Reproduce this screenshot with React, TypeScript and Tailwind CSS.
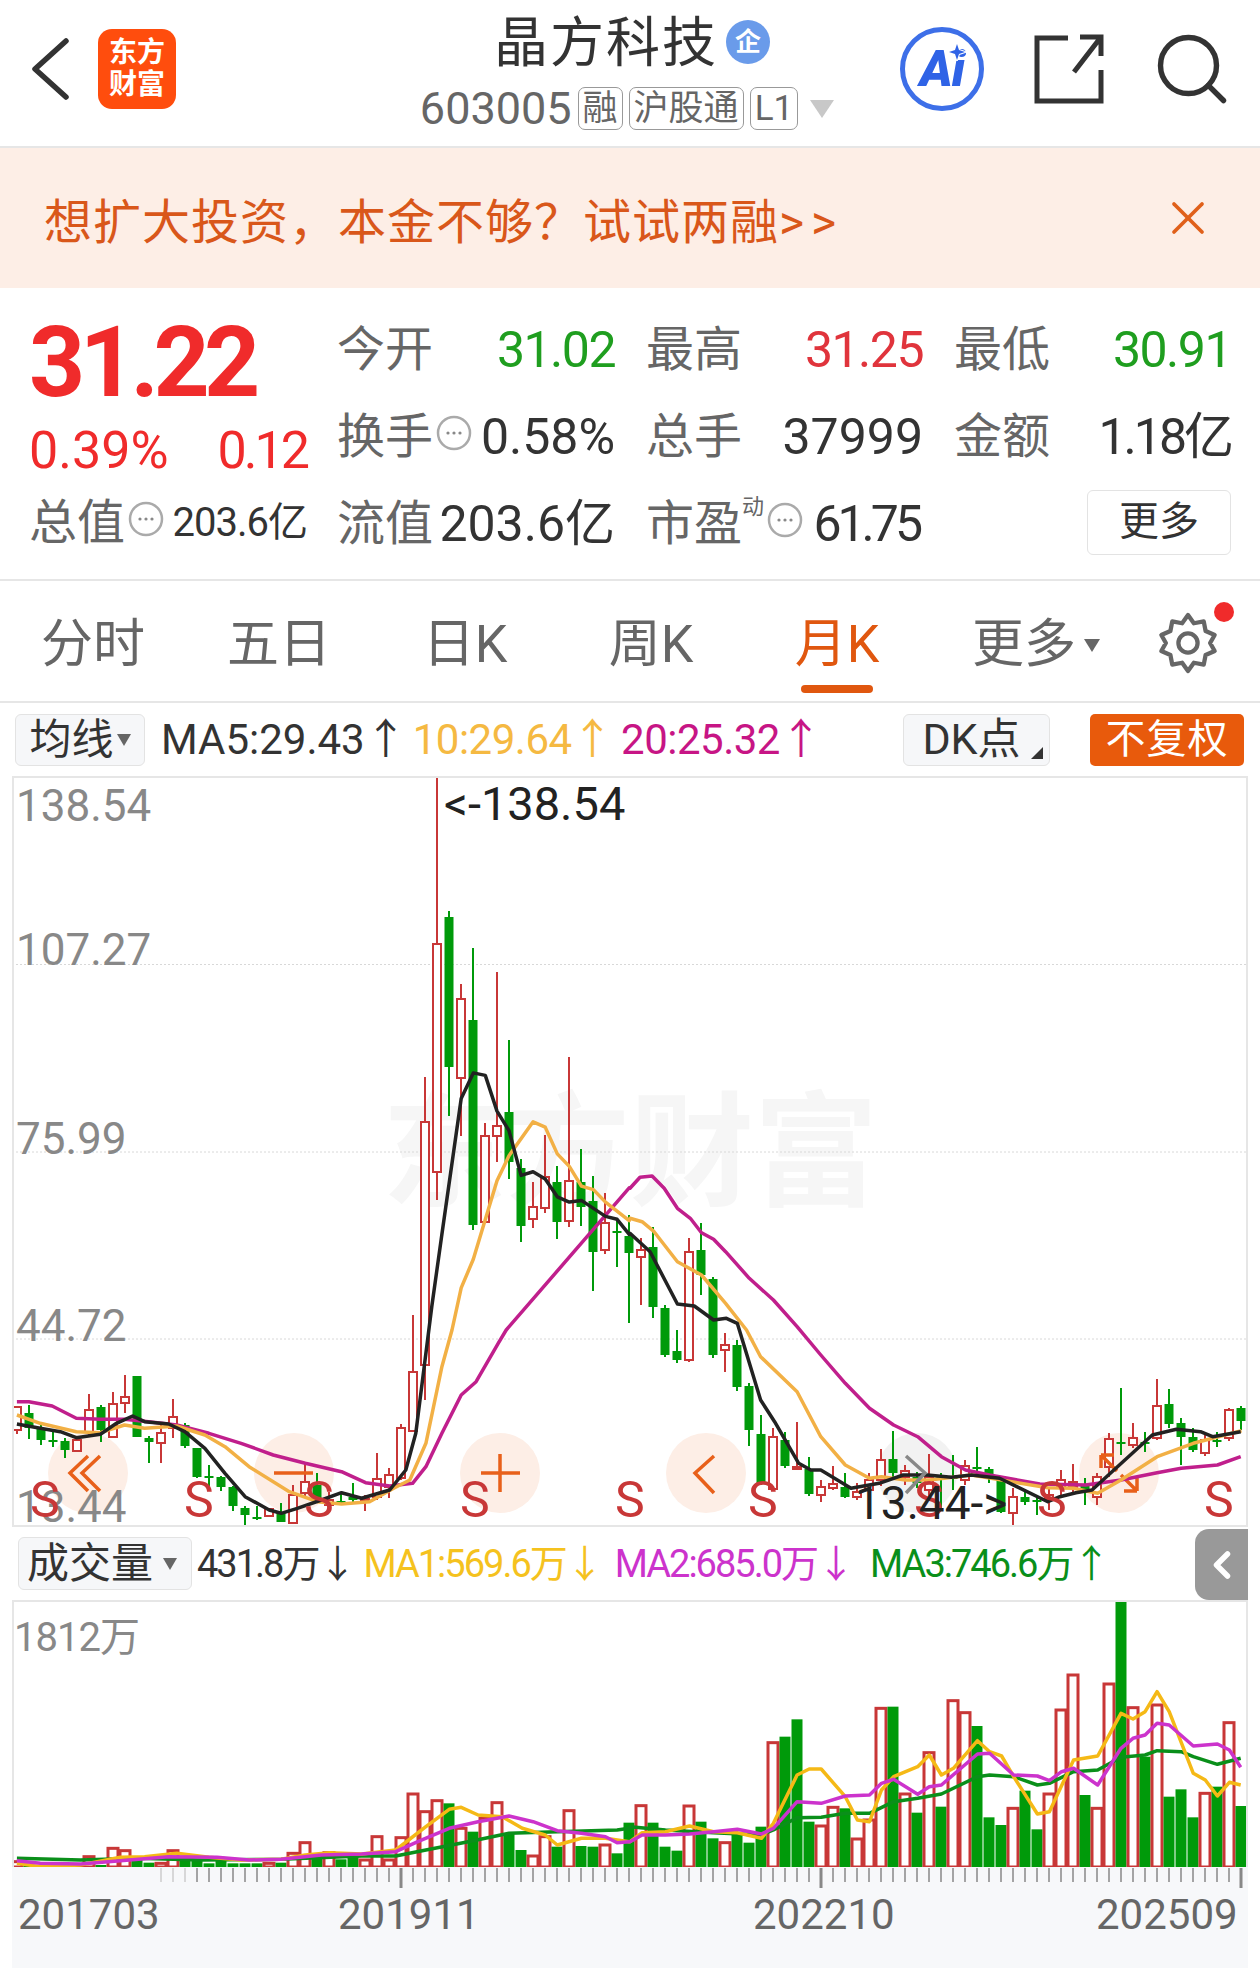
import { ChevronLeft, Search, X } from 'lucide-react';
import type { ReactNode } from 'react';

type Candle = [number, number, number, number, number];
type Pt = [number, number];

// high, body top, body bottom, low, 1 = up. All in page pixels.
const candles: Candle[] = [
  [1406, 1407, 1430, 1434, 1], [1405, 1413, 1428, 1439, 0], [1425, 1428, 1440, 1445, 0], [1432, 1440, 1442, 1447, 0],
  [1438, 1441, 1450, 1458, 0], [1437, 1440, 1451, 1452, 1], [1394, 1410, 1432, 1437, 1], [1405, 1407, 1430, 1442, 0],
  [1392, 1404, 1437, 1438, 1], [1375, 1397, 1403, 1413, 1], [1376, 1376, 1437, 1437, 0], [1436, 1438, 1442, 1463, 0],
  [1425, 1433, 1443, 1463, 1], [1399, 1417, 1428, 1438, 1], [1423, 1425, 1446, 1448, 0], [1448, 1448, 1477, 1478, 0],
  [1465, 1476, 1477, 1487, 0], [1476, 1477, 1487, 1491, 0], [1486, 1487, 1506, 1511, 0], [1506, 1508, 1515, 1525, 0],
  [1506, 1517, 1518, 1520, 0], [1509, 1509, 1516, 1517, 1], [1503, 1513, 1522, 1522, 0], [1485, 1495, 1523, 1523, 1],
  [1463, 1482, 1493, 1497, 1], [1473, 1485, 1498, 1500, 0], [1492, 1500, 1505, 1506, 1], [1492, 1501, 1502, 1505, 0],
  [1483, 1497, 1500, 1503, 0], [1495, 1499, 1500, 1511, 1], [1453, 1479, 1497, 1500, 1], [1468, 1475, 1487, 1498, 1],
  [1424, 1428, 1478, 1480, 1], [1315, 1372, 1431, 1432, 1], [1077, 1122, 1365, 1400, 1], [777, 944, 1172, 1200, 1],
  [911, 917, 1067, 1116, 0], [984, 999, 1078, 1136, 1], [948, 1020, 1225, 1230, 0], [1123, 1136, 1222, 1222, 1],
  [972, 1126, 1136, 1162, 1], [1040, 1112, 1162, 1179, 0], [1159, 1168, 1226, 1242, 0], [1182, 1207, 1219, 1228, 1],
  [1135, 1177, 1208, 1213, 1], [1166, 1182, 1222, 1239, 0], [1057, 1181, 1221, 1227, 1], [1149, 1182, 1207, 1226, 0],
  [1176, 1201, 1252, 1291, 0], [1193, 1223, 1250, 1254, 1], [1218, 1231, 1232, 1267, 0], [1215, 1236, 1253, 1323, 0],
  [1238, 1250, 1257, 1305, 1], [1227, 1247, 1307, 1318, 0], [1305, 1308, 1355, 1357, 0], [1330, 1351, 1360, 1363, 0],
  [1238, 1252, 1360, 1362, 1], [1223, 1250, 1275, 1295, 0], [1277, 1279, 1355, 1358, 0], [1333, 1345, 1350, 1372, 1],
  [1340, 1345, 1387, 1391, 0], [1383, 1386, 1430, 1446, 0], [1415, 1434, 1483, 1485, 0], [1428, 1437, 1489, 1489, 1],
  [1432, 1440, 1466, 1468, 0], [1422, 1467, 1469, 1470, 1], [1457, 1469, 1494, 1496, 0], [1480, 1487, 1495, 1502, 1],
  [1466, 1484, 1488, 1490, 1], [1473, 1487, 1497, 1498, 0], [1483, 1492, 1497, 1500, 1], [1473, 1480, 1490, 1496, 1],
  [1449, 1460, 1480, 1486, 1], [1431, 1459, 1473, 1478, 0], [1465, 1471, 1477, 1485, 1], [1472, 1477, 1483, 1488, 0],
  [1454, 1477, 1490, 1500, 1], [1473, 1475, 1479, 1510, 0], [1455, 1477, 1479, 1490, 0], [1460, 1466, 1480, 1485, 1],
  [1447, 1467, 1469, 1473, 0], [1467, 1469, 1474, 1483, 0], [1478, 1480, 1512, 1513, 0], [1488, 1497, 1513, 1527, 1],
  [1492, 1497, 1502, 1505, 0], [1497, 1500, 1502, 1515, 0], [1488, 1495, 1500, 1510, 1], [1470, 1480, 1488, 1497, 1],
  [1464, 1482, 1487, 1495, 1], [1478, 1485, 1493, 1505, 0], [1473, 1477, 1497, 1505, 1], [1433, 1439, 1467, 1477, 1],
  [1388, 1442, 1444, 1455, 0], [1423, 1438, 1445, 1448, 1], [1432, 1442, 1443, 1452, 0], [1379, 1406, 1438, 1440, 1],
  [1389, 1404, 1424, 1428, 0], [1418, 1423, 1437, 1465, 0], [1428, 1437, 1450, 1452, 0], [1435, 1440, 1453, 1456, 1],
  [1432, 1440, 1441, 1447, 0], [1408, 1410, 1438, 1441, 1], [1406, 1408, 1421, 1430, 0],
];

// volume bar tops, page y = 1520 + v / 3
const volumes = [
  1025, 1038, 1040, 1040, 1042, 1040, 1010, 1035, 985, 992, 1010, 1028, 1030, 992, 1020, 1020, 1030, 1020, 1030, 1030,
  1030, 1030, 1028, 1000, 968, 1015, 998, 1018, 1010, 1020, 950, 1020, 953, 822, 875, 842, 850, 925, 935, 895,
  848, 940, 990, 1008, 950, 980, 872, 978, 980, 975, 1000, 908, 857, 908, 980, 992, 858, 905, 955, 968,
  945, 968, 920, 668, 650, 598, 905, 918, 862, 865, 957, 900, 565, 560, 822, 878, 698, 860, 542, 578,
  618, 892, 915, 865, 812, 928, 822, 570, 465, 825, 865, 492, 243, 563, 710, 555, 830, 808, 892, 820,
  800, 608, 858,
];
const volUp = new Set([0, 5, 6, 8, 9, 12, 13, 21, 23, 24, 26, 29, 30, 31, 32, 33, 34, 35, 37, 39, 40, 43, 44, 46, 49, 52, 56, 59, 63, 67, 68, 70, 71, 72, 74, 76, 78, 79, 83, 86, 87, 88, 90, 91, 93, 95, 99, 101]);

const at = (pts: Pt[], ox: number, oy: number, sy: number): Pt[] => pts.map(([x, y]) => [ox + x / 2.489, oy + y / sy]);
const line = (...parts: Pt[][]) => parts.flat().map(([x, y]) => `${x.toFixed(1)},${y.toFixed(1)}`).join(' ');

const ma5 = line(
  at([[42, 372], [100, 385], [150, 395], [190, 413], [250, 403], [290, 370], [330, 348], [360, 365], [420, 372], [460, 395], [510, 445], [560, 520], [610, 590], [670, 630], [700, 640], [740, 625], [800, 600], [850, 578], [900, 595], [970, 570], [1010, 510], [1035, 400], [1060, 160]], 0, 1300, 3),
  at([[1075, 1500], [1100, 1300], [1148, 920], [1178, 848], [1208, 855], [1237, 955], [1267, 1010], [1297, 1135], [1327, 1125], [1357, 1145], [1387, 1195], [1417, 1210], [1447, 1205], [1507, 1250], [1536, 1258], [1566, 1300]], 0, 770, 2.8),
  at([[0, 400], [50, 455], [118, 612], [160, 618], [208, 660], [240, 655], [267, 670], [325, 900], [360, 965], [420, 1090], [450, 1110], [475, 1110], [550, 1165], [620, 1150], [680, 1125], [740, 1125], [800, 1132], [850, 1125], [920, 1135], [1040, 1205], [1070, 1190], [1110, 1178], [1150, 1170], [1300, 1005], [1360, 988], [1420, 995], [1450, 1010], [1520, 995]], 630, 1100, 3),
);
const ma10 = line(
  at([[42, 345], [100, 370], [190, 395], [250, 398], [310, 375], [360, 385], [440, 378], [510, 405], [560, 440], [620, 500], [720, 575], [790, 605], [850, 612], [920, 605], [980, 565], [1020, 540], [1060, 430], [1100, 200]], 0, 1300, 3),
  at([[1125, 1568], [1148, 1450], [1178, 1370], [1237, 1150], [1267, 1080], [1327, 985], [1357, 1000], [1387, 1075], [1417, 1110], [1447, 1165], [1477, 1175], [1507, 1210], [1566, 1262]], 0, 770, 2.8),
  at([[0, 355], [30, 365], [60, 395], [118, 485], [178, 525], [238, 610], [290, 690], [325, 770], [416, 875], [475, 1010], [536, 1095], [596, 1135], [626, 1130], [686, 1140], [745, 1140], [850, 1125], [1040, 1163], [1104, 1165], [1164, 1180], [1222, 1140], [1312, 1070], [1402, 1030], [1522, 992]], 630, 1100, 3),
);
const ma20 = line(
  at([[42, 305], [72, 305], [130, 318], [190, 355], [250, 358], [310, 358], [370, 365], [440, 375], [520, 400], [600, 430], [680, 465], [760, 490], [850, 515], [910, 548], [970, 558], [1027, 550], [1060, 500], [1100, 400], [1148, 285], [1185, 245], [1240, 130]], 0, 1300, 3),
  at([[1260, 1568], [1566, 1170]], 0, 770, 2.8),
  at([[0, 265], [25, 232], [55, 228], [85, 265], [118, 325], [150, 355], [178, 398], [208, 418], [238, 455], [297, 535], [357, 600], [416, 680], [475, 765], [536, 850], [596, 925], [656, 975], [716, 1010], [775, 1070], [835, 1110], [895, 1125], [1020, 1152], [1134, 1155], [1222, 1140], [1312, 1118], [1372, 1105], [1462, 1095], [1520, 1070]], 630, 1100, 3),
);
const volMa1 = line(
  at([[42, 1030], [100, 1040], [200, 1035], [300, 1012], [360, 1010], [440, 1000], [520, 1012], [600, 1020], [700, 1018], [760, 1005], [820, 998], [900, 1002], [985, 990], [1060, 920], [1118, 868], [1148, 862], [1190, 885], [1250, 890], [1300, 925], [1357, 945], [1387, 975], [1447, 955], [1507, 955], [1566, 965]], 0, 1520, 3),
  at([[0, 965], [30, 938], [88, 935], [148, 918], [208, 935], [267, 938], [327, 955], [357, 910], [416, 765], [446, 747], [476, 747], [536, 830], [566, 900], [596, 905], [626, 810], [656, 770], [716, 740], [745, 705], [775, 765], [805, 745], [865, 662], [895, 695], [925, 708], [955, 770], [1014, 882], [1044, 875], [1104, 720], [1164, 708], [1222, 580], [1252, 597], [1282, 575], [1312, 515], [1342, 575], [1402, 760], [1432, 780], [1462, 828], [1492, 787], [1520, 795]], 630, 1520, 3),
);
const volMa2 = line(
  at([[42, 1022], [100, 1030], [200, 1032], [300, 1022], [420, 1010], [540, 1012], [620, 1020], [700, 1018], [800, 1005], [900, 1002], [985, 995], [1040, 965], [1118, 925], [1190, 905], [1267, 888], [1327, 905], [1387, 932], [1447, 940], [1507, 950], [1536, 968], [1566, 965]], 0, 1520, 3),
  at([[0, 965], [30, 945], [88, 945], [148, 942], [208, 935], [267, 928], [327, 942], [357, 925], [416, 845], [476, 850], [536, 828], [596, 825], [626, 790], [656, 778], [716, 823], [745, 800], [775, 795], [865, 702], [895, 700], [955, 765], [1014, 768], [1044, 782], [1074, 755], [1104, 745], [1164, 795], [1222, 685], [1252, 655], [1282, 645], [1312, 610], [1342, 615], [1402, 678], [1462, 672], [1492, 690], [1520, 742]], 630, 1520, 3),
);
const volMa3 = line(
  at([[42, 1015], [200, 1020], [340, 1015], [500, 1020], [700, 1018], [900, 1008], [985, 1008], [1060, 990], [1178, 962], [1267, 940], [1387, 935], [1536, 930], [1566, 925]], 0, 1520, 3),
  at([[0, 920], [88, 930], [208, 938], [327, 945], [357, 930], [416, 893], [476, 892], [536, 880], [596, 880], [656, 845], [716, 835], [775, 822], [865, 770], [895, 765], [955, 770], [1014, 795], [1044, 790], [1104, 755], [1164, 750], [1222, 712], [1282, 705], [1312, 692], [1372, 695], [1402, 710], [1462, 733], [1520, 715]], 630, 1520, 3),
);

const RED = '#c83737';
const GREEN = '#009a0a';
const barX = (i: number) => 17 + 12 * i;

const Tag = ({ children }: { children: ReactNode }) => (
  <span className="flex h-[43px] items-center rounded-[7px] border border-[#999] px-[4px] text-[35px] leading-none text-[#666]">{children}</span>
);

const Dots = () => (
  <svg width="36" height="36" viewBox="0 0 36 36" className="ml-[3px] shrink-0 -translate-y-[4px]">
    <circle cx="18" cy="18" r="16" fill="none" stroke="#aaa" strokeWidth="2.5" />
    <circle cx="12" cy="18" r="1.6" fill="#888" />
    <circle cx="18" cy="18" r="1.6" fill="#888" />
    <circle cx="24" cy="18" r="1.6" fill="#888" />
  </svg>
);

const Stat = ({ label, extra, value, color }: { label: string; extra?: ReactNode; value: string; color: string }) => (
  <div className="flex items-center justify-between">
    <div className="flex items-center text-[#666]">
      <span className="text-[48px] leading-none">{label}</span>
      {extra}
    </div>
    <span className={`text-[50px] leading-none ${color}`}>{value}</span>
  </div>
);

const Tab = ({ label, active }: { label: string; active?: boolean }) => (
  <div className={`relative flex h-full w-[186px] items-center justify-center pt-[8px] text-[52px] leading-none ${active ? 'text-[#e0570f]' : 'text-[#666]'}`}>
    {label}
    {active && <span className="absolute bottom-[8px] left-[57px] h-[8px] w-[72px] rounded-full bg-[#e0570f]" />}
  </div>
);

const ChartLabel = ({ className, children }: { className: string; children: ReactNode }) => (
  <span className={`absolute leading-none whitespace-nowrap ${className}`}>{children}</span>
);

const CandleChart = () => (
  <svg viewBox="14 778 1232 747" className="absolute inset-0 h-full w-full">
    {[964.5, 1152, 1339].map(y => (
      <line key={y} x1="12" x2="1248" y1={y} y2={y} stroke="#d8d8d8" strokeWidth="1" strokeDasharray="2 2" />
    ))}
    {[88, 294, 500, 706, 917, 1119].map((cx, i) => (
      <ellipse key={cx} cx={cx} cy="1473" rx="40" ry="40" fill={i === 4 ? '#f2f2f2' : '#fdeee6'} />
    ))}
    {candles.map(([h, t, b, l, up], i) => {
      const x = barX(i);
      const color = up ? RED : GREEN;
      return (
        <g key={i}>
          <line x1={x} x2={x} y1={h} y2={l} stroke={color} strokeWidth="2" />
          {up ? (
            <rect x={x - 4} y={t} width="8" height={Math.max(b - t, 2)} fill="#fff" stroke={color} strokeWidth="2" />
          ) : (
            <rect x={x - 4.5} y={t} width="9" height={Math.max(b - t, 2)} fill={color} />
          )}
        </g>
      );
    })}
    <g fill="none" stroke="#e8601a" strokeWidth="3.5">
      <path d="M88 1456 L70 1473 L88 1491 M100 1456 L82 1473 L100 1491" />
      <path d="M274 1473 H313" />
      <path d="M481 1473 H520 M500 1454 V1492" />
      <path d="M714 1456 L695 1473 L714 1493" />
      <path d="M1101 1455 H1114 M1101 1455 V1468 M1101 1455 L1117 1471 M1137 1491 H1124 M1137 1491 V1478 M1137 1491 L1121 1475" />
    </g>
    <polyline points={ma20} fill="none" stroke="#c01f8c" strokeWidth="3.5" strokeLinejoin="round" />
    <polyline points={ma10} fill="none" stroke="#f2b045" strokeWidth="3.5" strokeLinejoin="round" />
    <polyline points={ma5} fill="none" stroke="#222" strokeWidth="3.5" strokeLinejoin="round" />
    <path d="M906 1456 L925 1473 L906 1493" fill="none" stroke="#888" strokeWidth="3.5" />
  </svg>
);

const VolumeChart = () => (
  <svg viewBox="14 1602 1232 265" className="absolute inset-0 h-full w-full">
    {volumes.map((v, i) => {
      const y = 1520 + v / 3;
      const x = barX(i);
      return volUp.has(i) ? (
        <rect key={i} x={x - 5} y={y} width="10" height={1867 - y} fill="#fff" stroke={RED} strokeWidth="3" />
      ) : (
        <rect key={i} x={x - 5.5} y={y} width="11" height={1868 - y} fill={GREEN} />
      );
    })}
    <polyline points={volMa3} fill="none" stroke="#0a8f1a" strokeWidth="3.5" strokeLinejoin="round" />
    <polyline points={volMa1} fill="none" stroke="#f5b916" strokeWidth="3.5" strokeLinejoin="round" />
    <polyline points={volMa2} fill="none" stroke="#cc33cc" strokeWidth="3.5" strokeLinejoin="round" />
  </svg>
);

const Ticks = () => (
  <svg viewBox="12 1867 1236 24" className="absolute left-0 top-0 h-[24px] w-full">
    {candles.map((_, i) => {
      if (i < 12) return null;
      const major = i === 32 || i === 67 || i === 102;
      return <line key={i} x1={barX(i)} x2={barX(i)} y1="1868" y2={major ? 1888 : 1882} stroke={i < 15 ? '#ccc' : '#888'} strokeWidth={major ? 3 : 1.5} />;
    })}
  </svg>
);

export default function App() {
  return (
    <div className="h-[1972px] w-[1260px] overflow-hidden bg-white font-['Roboto','Noto_Sans_CJK_SC',sans-serif]">
      {/* header */}
      <header className="relative flex h-[148px] items-center border-b-2 border-[#e6e6e6] pb-[8px]">
        <svg width="40" height="62" viewBox="0 0 40 62" fill="none" stroke="#333" strokeWidth="5.5" strokeLinecap="round" strokeLinejoin="round" className="ml-[30px]">
          <path d="M36 3 L5 31 L36 59" />
        </svg>
        <div className="ml-[28px] flex h-[80px] w-[78px] flex-col items-center justify-center rounded-[14px] bg-[#ff4d0d] text-[28px] font-bold leading-[32px] text-white">
          <span>东方</span>
          <span>财富</span>
        </div>
        <div className="ml-[241px] flex w-[420px] flex-col items-center self-start pt-[15px]">
          <div className="ml-[10px] flex items-center">
            <span className="text-[54px] leading-[58px] tracking-[2px] text-[#333]">晶方科技</span>
            <span className="ml-[8px] flex h-[44px] w-[44px] -translate-y-[2px] items-center justify-center rounded-full bg-[#6a9bea] text-[26px] font-bold leading-none text-white">企</span>
          </div>
          <div className="mt-[13px] flex items-center gap-[6px]">
            <span className="text-[45px] leading-none text-[#666]">603005</span>
            <Tag>融</Tag>
            <Tag>沪股通</Tag>
            <Tag>L1</Tag>
            <span className="ml-[6px] h-0 w-0 border-x-[12px] border-t-[18px] border-x-transparent border-t-[#c8c8c8]" />
          </div>
        </div>
        <div className="ml-[63px] flex items-center">
          <div className="relative flex h-[84px] w-[84px] items-center justify-center rounded-full border-[5px] border-[#3d6fe8] bg-white text-[50px] font-black italic leading-none tracking-[-1px] text-[#2f63e6]">
            Ai
            <svg width="18" height="18" viewBox="0 0 18 18" className="absolute left-[43px] top-[11px]">
              <path d="M9 1 L11 7 L17 9 L11 11 L9 17 L7 11 L1 9 L7 7 Z" fill="#2f63e6" stroke="#fff" strokeWidth="2" paintOrder="stroke" />
            </svg>
          </div>
          <svg width="70" height="70" viewBox="0 0 70 70" className="ml-[50px]" fill="none" stroke="#333" strokeWidth="5">
            <path d="M34 4 H3 V67 H67 V36" />
            <path d="M67 3 L40 38 M46 3 H67 V22" />
          </svg>
          <Search className="ml-[46px] h-[84px] w-[84px] text-[#333]" strokeWidth={1.55} />
        </div>
      </header>

      {/* banner */}
      <div className="flex h-[140px] items-center justify-between bg-[#fdeee6] pl-[44px] pr-[44px]">
        <span className="mt-[10px] text-[48px] leading-none tracking-[1px] text-[#d9571a]">
          想扩大投资，本金不够？试试两融<span className="tracking-[7px]">&gt;&gt;</span>
        </span>
        <X className="h-[56px] w-[56px] text-[#e0601a]" strokeWidth={1.6} />
      </div>

      {/* quote */}
      <section className="flex h-[293px] border-b-2 border-[#e6e6e6]">
        <div className="flex w-[337px] flex-col pl-[29px] pt-[27px]">
          <span className="text-[98px] font-bold leading-[96px] tracking-[-5.5px] text-[#f02b2b]">31.22</span>
          <div className="mt-[14px] flex w-[278px] justify-between text-[52px] leading-[52px] text-[#f02b2b]">
            <span>0.39%</span>
            <span className="tracking-[-3px]">0.12</span>
          </div>
          <div className="mt-[22px] flex w-[278px] items-center text-[#666]">
            <span className="text-[48px] leading-none">总值</span>
            <Dots />
            <span className="ml-auto text-[40px] leading-none tracking-[-1px] text-[#333]">203.6亿</span>
          </div>
        </div>
        <div className="grid h-[280px] grid-cols-[278px_277px_277px] grid-rows-3 gap-x-[31px] pt-[18px]">
          <Stat label="今开" value="31.02" color="tracking-[-1.5px] text-[#1f9e1f]" />
          <Stat label="最高" value="31.25" color="tracking-[-1.5px] text-[#e0343c]" />
          <Stat label="最低" value="30.91" color="tracking-[-1.5px] text-[#1f9e1f]" />
          <Stat label="换手" extra={<Dots />} value="0.58%" color="text-[#333]" />
          <Stat label="总手" value="37999" color="text-[#333]" />
          <Stat label="金额" value="1.18亿" color="tracking-[-3px] text-[#333]" />
          <Stat label="流值" value="203.6亿" color="text-[#333]" />
          <Stat
            label="市盈"
            extra={
              <>
                <span className="-mt-[34px] text-[22px] leading-none">动</span>
                <Dots />
              </>
            }
            value="61.75"
            color="mr-[4px] tracking-[-4px] text-[#333]"
          />
          <div className="flex items-center justify-end pb-[4px]">
            <span className="flex h-[65px] w-[144px] items-center justify-center rounded-[6px] border border-[#e3e3e3] text-[40px] leading-none text-[#333]">更多</span>
          </div>
        </div>
      </section>

      {/* period tabs */}
      <nav className="flex h-[122px] items-center border-b-2 border-[#e6e6e6]">
        <Tab label="分时" />
        <Tab label="五日" />
        <Tab label="日K" />
        <Tab label="周K" />
        <Tab label="月K" active />
        <div className="ml-[42px] flex items-center pt-[8px] text-[52px] leading-none text-[#666]">
          更多
          <span className="ml-[8px] h-0 w-0 border-x-[8px] border-t-[13px] border-x-transparent border-t-[#666]" />
        </div>
        <div className="relative ml-[56px] mt-[4px]">
          <svg width="64" height="64" viewBox="0 0 24 24" fill="none" stroke="#666" strokeWidth="1.6" strokeLinejoin="round">
            <path d="M12 1.5 L14.2 4.6 L17.9 3.9 L18.6 7.5 L22 9 L20.3 12 L22 15 L18.6 16.5 L17.9 20.1 L14.2 19.4 L12 22.5 L9.8 19.4 L6.1 20.1 L5.4 16.5 L2 15 L3.7 12 L2 9 L5.4 7.5 L6.1 3.9 L9.8 4.6 Z" />
            <circle cx="12" cy="12" r="3.6" />
          </svg>
          <span className="absolute -right-[14px] -top-[9px] h-[20px] w-[20px] rounded-full bg-[#f02b2b]" />
        </div>
      </nav>

      {/* MA row */}
      <div className="flex h-[73px] items-center pl-[15px] pr-[16px] text-[42px] leading-none">
        <div className="flex h-[52px] w-[130px] items-center justify-center rounded-[6px] border border-[#e3e3e3] bg-[#f6f7f9] text-[42px] text-[#333]">
          均线
          <span className="ml-[3px] h-0 w-0 border-x-[7px] border-t-[12px] border-x-transparent border-t-[#666]" />
        </div>
        <span className="ml-[16px] whitespace-nowrap text-[#333]">MA5:29.43↑</span>
        <span className="ml-[6px] whitespace-nowrap tracking-[-0.5px] text-[#f5b942]">10:29.64↑</span>
        <span className="ml-[8px] whitespace-nowrap tracking-[-0.5px] text-[#c71585]">20:25.32↑</span>
        <div className="relative ml-auto flex h-[52px] w-[147px] items-center justify-center rounded-[6px] border border-[#e3e3e3] bg-[#f6f7f9] pr-[10px] text-[43px] text-[#333]">
          DK点
          <span className="absolute bottom-[6px] right-[6px] h-0 w-0 border-b-[12px] border-l-[12px] border-b-[#333] border-l-transparent" />
        </div>
        <div className="ml-[40px] flex h-[52px] w-[154px] items-center justify-center rounded-[5px] bg-[#e85a0c] text-[40px] tracking-[1px] text-white">不复权</div>
      </div>

      {/* candle chart */}
      <div className="relative mx-[12px] h-[751px] w-[1236px] overflow-hidden border-x-2 border-y-2 border-[#e6e6e6]">
        <span className="absolute left-[368px] top-[314px] text-[124px] font-bold leading-none text-[#f6f6f6]">东方财富</span>
        <CandleChart />
        <ChartLabel className="left-[2px] top-[6px] text-[44px] text-[#888]">138.54</ChartLabel>
        <ChartLabel className="left-[2px] top-[150px] text-[44px] text-[#888]">107.27</ChartLabel>
        <ChartLabel className="left-[2px] top-[339px] text-[44px] text-[#888]">75.99</ChartLabel>
        <ChartLabel className="left-[2px] top-[526px] text-[44px] text-[#888]">44.72</ChartLabel>
        <ChartLabel className="left-[2px] top-[707px] text-[44px] text-[#888]">13.44</ChartLabel>
        <ChartLabel className="left-[16px] top-[697px] text-[50px] text-[#c83737]">S</ChartLabel>
        <ChartLabel className="left-[170px] top-[697px] text-[50px] text-[#c83737]">S</ChartLabel>
        <ChartLabel className="left-[290px] top-[697px] text-[50px] text-[#c83737]">S</ChartLabel>
        <ChartLabel className="left-[446px] top-[697px] text-[50px] text-[#c83737]">S</ChartLabel>
        <ChartLabel className="left-[601px] top-[697px] text-[50px] text-[#c83737]">S</ChartLabel>
        <ChartLabel className="left-[734px] top-[697px] text-[50px] text-[#c83737]">S</ChartLabel>
        <ChartLabel className="left-[900px] top-[697px] text-[50px] text-[#c83737]">S</ChartLabel>
        <ChartLabel className="left-[1023px] top-[697px] text-[50px] text-[#c83737]">S</ChartLabel>
        <ChartLabel className="left-[1190px] top-[697px] text-[50px] text-[#c83737]">S</ChartLabel>
        <ChartLabel className="left-[430px] top-[2px] text-[47px] text-[#222]">&lt;-138.54</ChartLabel>
        <ChartLabel className="left-[841px] top-[702px] text-[46px] text-[#222]">13.44-&gt;</ChartLabel>
      </div>

      {/* volume row */}
      <div className="relative flex h-[73px] items-center whitespace-nowrap pl-[18px] text-[38px] leading-none">
        <div className="flex h-[53px] w-[174px] items-center justify-center rounded-[6px] border border-[#e3e3e3] bg-[#f6f7f9] pr-[6px] text-[42px] text-[#333]">
          成交量
          <span className="ml-[10px] h-0 w-0 border-x-[7px] border-t-[12px] border-x-transparent border-t-[#666]" />
        </div>
        <span className="ml-[5px] tracking-[-2px] text-[#333]">431.8万↓</span>
        <span className="ml-[9px] tracking-[-2px] text-[#f5c21e]">MA1:569.6万↓</span>
        <span className="ml-[13px] tracking-[-2px] text-[#cc33cc]">MA2:685.0万↓</span>
        <span className="ml-[17px] tracking-[-2px] text-[#0a8f1a]">MA3:746.6万↑</span>
        <div className="absolute bottom-0 right-[12px] top-[2px] flex w-[53px] items-center justify-center rounded-l-[14px] bg-[#999]">
          <ChevronLeft className="h-[44px] w-[44px] text-white" strokeWidth={3} />
        </div>
      </div>

      {/* volume chart */}
      <div className="relative mx-[12px] h-[267px] w-[1236px] overflow-hidden border-x-2 border-t-2 border-[#e6e6e6]">
        <VolumeChart />
        <ChartLabel className="left-0 top-[16px] text-[40px] tracking-[-1px] text-[#888]">1812万</ChartLabel>
      </div>

      {/* date axis */}
      <div className="relative mx-[12px] h-[101px] w-[1236px] bg-[#f7f8fa]">
        <Ticks />
        <ChartLabel className="left-[6px] top-[27px] text-[42px] text-[#666]">201703</ChartLabel>
        <ChartLabel className="left-[326px] top-[27px] text-[42px] text-[#666]">201911</ChartLabel>
        <ChartLabel className="left-[741px] top-[27px] text-[42px] text-[#666]">202210</ChartLabel>
        <ChartLabel className="left-[1084px] top-[27px] text-[42px] text-[#666]">202509</ChartLabel>
      </div>
    </div>
  );
}
